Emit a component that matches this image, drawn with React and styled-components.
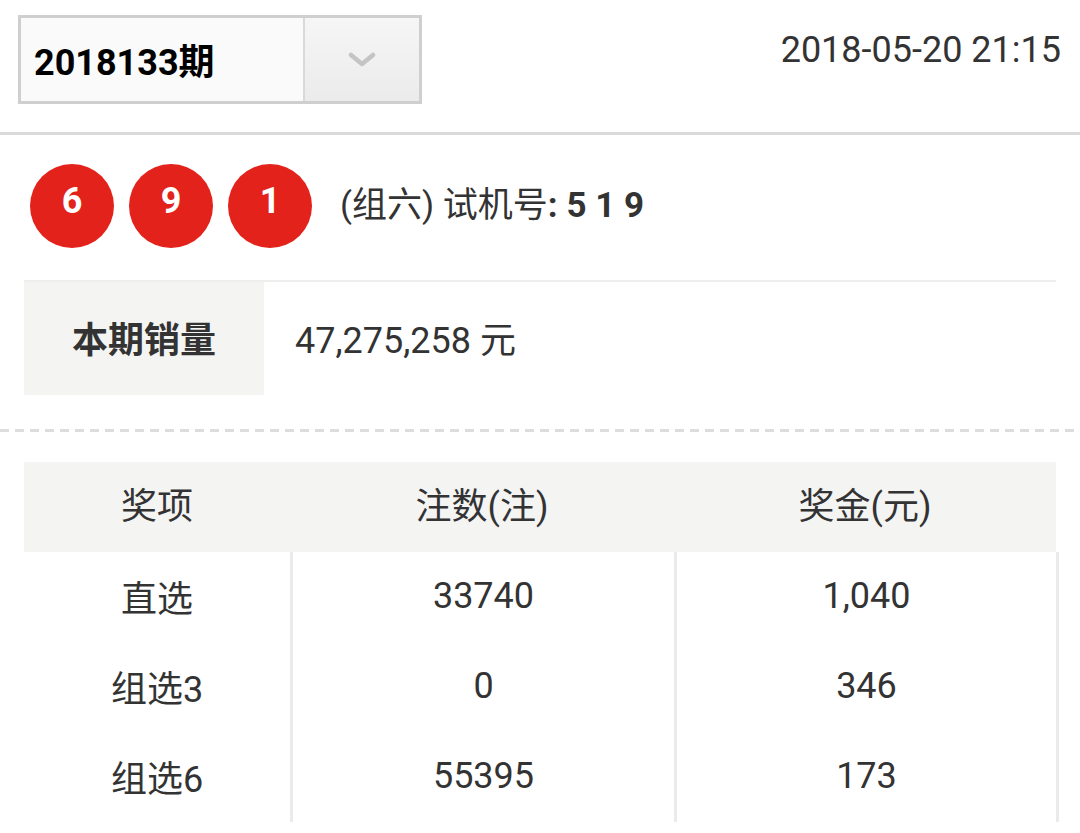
import React from 'react';
import styled, { createGlobalStyle } from 'styled-components';

const GlobalStyle = createGlobalStyle`
  * {
    box-sizing: border-box;
  }
  body {
    margin: 0;
    background: #ffffff;
    font-family: Roboto, "Noto Sans CJK SC", sans-serif;
    color: #333333;
  }
`;

const Page = styled.div`
  width: 1080px;
  min-height: 833px;
  background: #ffffff;
`;

const TopBar = styled.header`
  display: flex;
  justify-content: space-between;
  align-items: flex-start;
  height: 135px;
  padding: 15px 19px 0 18px;
  border-bottom: 3px solid #dadada;
`;

const Select = styled.div`
  display: flex;
  width: 404px;
  height: 89px;
  border: 3px solid #cfcfcf;
`;

const SelectValue = styled.div`
  display: flex;
  align-items: center;
  width: 284px;
  padding: 0 0 2px 13px;
  background: #fafafa;
  border-right: 2px solid #d9d9d9;
  font-size: 36px;
  font-weight: 700;
  color: #000000;
`;

const SelectButton = styled.div`
  flex: 1;
  display: flex;
  align-items: center;
  justify-content: center;
  background: linear-gradient(#f6f6f6, #ebebeb);
`;

const DateText = styled.div`
  margin-top: 14px;
  font-size: 36px;
  line-height: 42px;
  color: #333333;
`;

const Content = styled.main`
  padding: 0 24px;
`;

const DrawRow = styled.div`
  display: flex;
  align-items: center;
  padding: 29px 0 32px 6px;
  border-bottom: 2px solid #eeeeee;
`;

const Balls = styled.div`
  display: flex;
  gap: 15px;
`;

const Ball = styled.span`
  display: flex;
  align-items: center;
  justify-content: center;
  width: 84px;
  height: 84px;
  padding-bottom: 10px;
  border-radius: 50%;
  background: #e3231b;
  color: #ffffff;
  font-size: 36px;
  font-weight: 700;
`;

const DrawInfo = styled.div`
  margin-left: 28px;
  margin-top: -10px;
  font-size: 35px;
  color: #333333;
  white-space: pre;
`;

const TrialNumber = styled.b`
  font-weight: 700;
`;

const SalesRow = styled.div`
  display: flex;
  height: 113px;
`;

const SalesLabel = styled.div`
  display: flex;
  align-items: center;
  justify-content: center;
  width: 240px;
  padding-bottom: 4px;
  background: #f4f4f3;
  font-size: 36px;
  font-weight: 700;
  color: #333333;
`;

const SalesValue = styled.div`
  display: flex;
  align-items: center;
  padding: 0 0 4px 31px;
  font-size: 36px;
  color: #333333;
`;

const Dashed = styled.div`
  height: 3px;
  margin: 34px 0 30px;
  background: repeating-linear-gradient(
    to right,
    #dddddd 0,
    #dddddd 9px,
    transparent 9px,
    transparent 15px
  );
`;

const Table = styled.section`
  margin: 0 24px;
`;

const HeaderRow = styled.div`
  display: grid;
  grid-template-columns: 266px 384px 382px;
  height: 90px;
  padding-bottom: 6px;
  background: #f4f4f3;
`;

const BodyRow = styled.div`
  display: grid;
  grid-template-columns: 266px 384px 385px;
  height: 90px;
`;

const Cell = styled.div`
  display: flex;
  align-items: center;
  justify-content: center;
  padding-bottom: 3px;
  font-size: 36px;
  color: #333333;
  border-left: ${(p) => (p.$divider ? '3px solid #ebebeb' : 'none')};
  border-right: ${(p) => (p.$last ? '3px solid #ebebeb' : 'none')};
`;

const Chevron = () => (
  <svg width="28" height="16" viewBox="0 0 28 16">
    <path
      d="M3 3 L14 12 L25 3"
      fill="none"
      stroke="#c4c4c4"
      strokeWidth="4.5"
      strokeLinecap="round"
      strokeLinejoin="round"
    />
  </svg>
);

const prizes = [
  { name: '直选', count: '33740', amount: '1,040' },
  { name: '组选3', count: '0', amount: '346' },
  { name: '组选6', count: '55395', amount: '173' },
];

export default function App() {
  return (
    <Page>
      <GlobalStyle />
      <TopBar>
        <Select>
          <SelectValue>2018133期</SelectValue>
          <SelectButton>
            <Chevron />
          </SelectButton>
        </Select>
        <DateText>2018-05-20 21:15</DateText>
      </TopBar>

      <Content>
        <DrawRow>
          <Balls>
            {['6', '9', '1'].map((n, i) => (
              <Ball key={i}>{n}</Ball>
            ))}
          </Balls>
          <DrawInfo>
            (组六) 试机号<TrialNumber>: 5 1 9</TrialNumber>
          </DrawInfo>
        </DrawRow>
        <SalesRow>
          <SalesLabel>本期销量</SalesLabel>
          <SalesValue>47,275,258 元</SalesValue>
        </SalesRow>
      </Content>

      <Dashed />

      <Table>
        <HeaderRow>
          <Cell>奖项</Cell>
          <Cell>注数(注)</Cell>
          <Cell>奖金(元)</Cell>
        </HeaderRow>
        {prizes.map((p) => (
          <BodyRow key={p.name}>
            <Cell>{p.name}</Cell>
            <Cell $divider>{p.count}</Cell>
            <Cell $divider $last>
              {p.amount}
            </Cell>
          </BodyRow>
        ))}
      </Table>
    </Page>
  );
}
